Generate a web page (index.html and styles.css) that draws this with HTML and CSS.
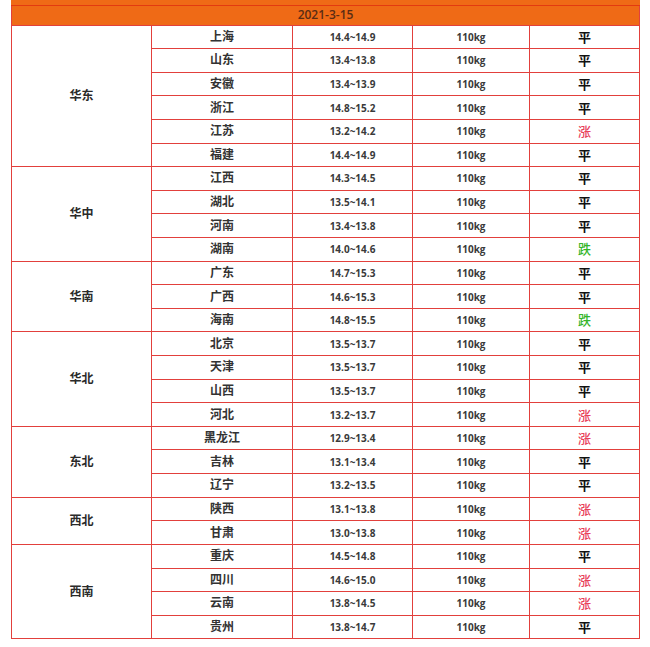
FILE: index.html
```html
<!DOCTYPE html>
<html lang="zh">
<head>
<meta charset="utf-8">
<link rel="stylesheet" href="styles.css">
</head>
<body>
<table class="price">
  <colgroup>
    <col class="c1"><col class="c2"><col class="c3"><col class="c4"><col class="c5">
  </colgroup>
  <tr class="strip"><td colspan="5"></td></tr>
  <tr class="head"><td colspan="5">2021-3-15</td></tr>
  <tr><td class="region" rowspan="6">华东</td><td>上海</td><td>14.4~14.9</td><td>110kg</td><td class="flat">平</td></tr>
  <tr><td>山东</td><td>13.4~13.8</td><td>110kg</td><td class="flat">平</td></tr>
  <tr><td>安徽</td><td>13.4~13.9</td><td>110kg</td><td class="flat">平</td></tr>
  <tr><td>浙江</td><td>14.8~15.2</td><td>110kg</td><td class="flat">平</td></tr>
  <tr><td>江苏</td><td>13.2~14.2</td><td>110kg</td><td class="up">涨</td></tr>
  <tr><td>福建</td><td>14.4~14.9</td><td>110kg</td><td class="flat">平</td></tr>
  <tr><td class="region" rowspan="4">华中</td><td>江西</td><td>14.3~14.5</td><td>110kg</td><td class="flat">平</td></tr>
  <tr><td>湖北</td><td>13.5~14.1</td><td>110kg</td><td class="flat">平</td></tr>
  <tr><td>河南</td><td>13.4~13.8</td><td>110kg</td><td class="flat">平</td></tr>
  <tr><td>湖南</td><td>14.0~14.6</td><td>110kg</td><td class="down">跌</td></tr>
  <tr><td class="region" rowspan="3">华南</td><td>广东</td><td>14.7~15.3</td><td>110kg</td><td class="flat">平</td></tr>
  <tr><td>广西</td><td>14.6~15.3</td><td>110kg</td><td class="flat">平</td></tr>
  <tr><td>海南</td><td>14.8~15.5</td><td>110kg</td><td class="down">跌</td></tr>
  <tr><td class="region" rowspan="4">华北</td><td>北京</td><td>13.5~13.7</td><td>110kg</td><td class="flat">平</td></tr>
  <tr><td>天津</td><td>13.5~13.7</td><td>110kg</td><td class="flat">平</td></tr>
  <tr><td>山西</td><td>13.5~13.7</td><td>110kg</td><td class="flat">平</td></tr>
  <tr><td>河北</td><td>13.2~13.7</td><td>110kg</td><td class="up">涨</td></tr>
  <tr><td class="region" rowspan="3">东北</td><td>黑龙江</td><td>12.9~13.4</td><td>110kg</td><td class="up">涨</td></tr>
  <tr><td>吉林</td><td>13.1~13.4</td><td>110kg</td><td class="flat">平</td></tr>
  <tr><td>辽宁</td><td>13.2~13.5</td><td>110kg</td><td class="flat">平</td></tr>
  <tr><td class="region" rowspan="2">西北</td><td>陕西</td><td>13.1~13.8</td><td>110kg</td><td class="up">涨</td></tr>
  <tr><td>甘肃</td><td>13.0~13.8</td><td>110kg</td><td class="up">涨</td></tr>
  <tr><td class="region" rowspan="4">西南</td><td>重庆</td><td>14.5~14.8</td><td>110kg</td><td class="flat">平</td></tr>
  <tr><td>四川</td><td>14.6~15.0</td><td>110kg</td><td class="up">涨</td></tr>
  <tr><td>云南</td><td>13.8~14.5</td><td>110kg</td><td class="up">涨</td></tr>
  <tr><td>贵州</td><td>13.8~14.7</td><td>110kg</td><td class="flat">平</td></tr>
</table>
</body>
</html>
```

FILE: styles.css
```css
html, body {
  margin: 0;
  padding: 0;
  background: #ffffff;
}
body {
  font-family: "Open Sans", "Noto Sans CJK SC", sans-serif;
  font-size: 12px;
  color: #333333;
}
.price {
  margin-left: 11px;
  width: 628px;
  border-collapse: collapse;
  table-layout: fixed;
}
.c1 { width: 140px; }
.c2 { width: 141px; }
.c3 { width: 120px; }
.c4 { width: 117px; }
.c5 { width: 110px; }
.price td {
  border: 1px solid #e2403c;
  text-align: center;
  vertical-align: middle;
  padding: 0;
  height: 22.62px;
  font-weight: 600;
  line-height: 14px;
}
.price td:nth-last-child(2),
.price td:nth-last-child(3) {
  font-size: 10px;
  font-weight: 700;
  color: #3a3a3a;
}
.price tr.strip td {
  height: 5px;
  background: #ef6a16;
  border-top: none;
  border-left-color: #ef6a16;
  border-right-color: #ef6a16;
  border-bottom: 1px solid #e33a10;
}
.price tr.head td {
  height: 18.5px;
  background: #ef6a16;
  color: #5a2c14;
  font-size: 12px;
  font-weight: 600;
  border-top: 1px solid #e33a10;
}
.price td.region {
  font-weight: 600;
  color: #2a2a2a;
}
.price td.flat {
  color: #111111;
  font-weight: 700;
  font-size: 13px;
}
.price td.up {
  color: #e8405a;
  font-weight: 500;
  font-size: 13px;
}
.price td.down {
  color: #35b52a;
  font-weight: 500;
  font-size: 13px;
}
```
